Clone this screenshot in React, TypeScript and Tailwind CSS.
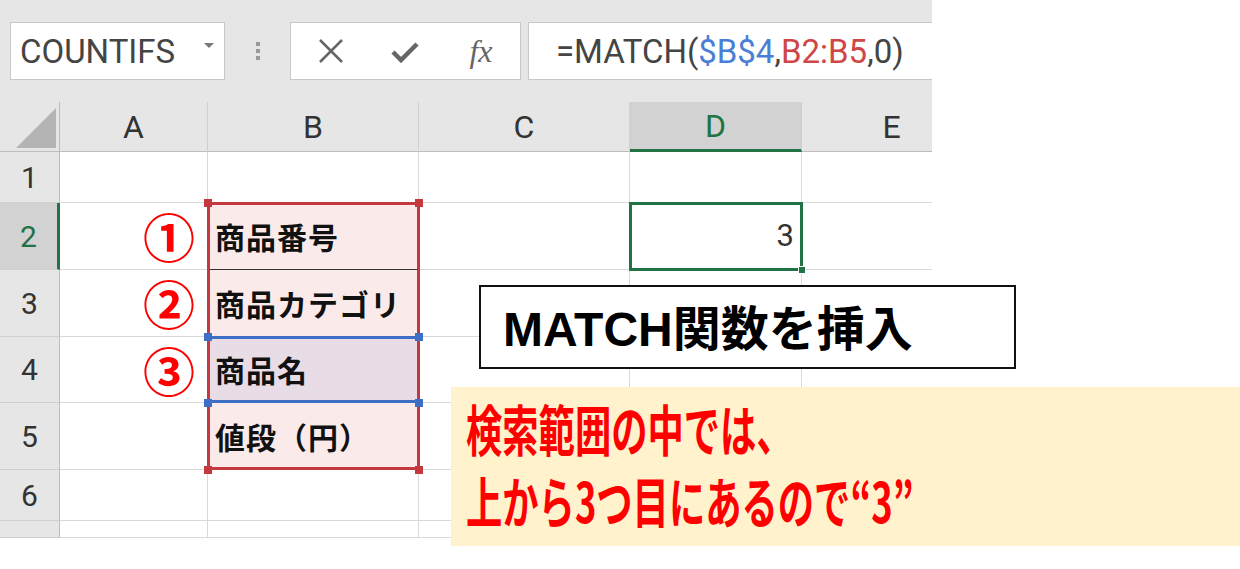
import React from "react";

const font = { fontFamily: 'Roboto, "Noto Sans", "Noto Sans CJK JP", sans-serif' };
const jp = { fontFamily: '"Noto Sans CJK JP", sans-serif' };

const cols = [148, 211, 211, 172, 180];
const rows = [51, 67, 67, 66, 67, 51, 17];

function Handle({ cls }: { cls: string }) {
  return <div className={`absolute w-[8px] h-[8px] ${cls}`} />;
}

export default function App() {
  const colLetters = ["A", "B", "C", "D", "E"];
  const bTexts = ["", "商品番号", "商品カテゴリ", "商品名", "値段（円）", "", ""];
  const circ = ["", "①", "②", "③", "", "", ""];
  return (
    <div className="relative w-[1240px] h-[569px] bg-white overflow-hidden" style={font}>
      <div className="w-[932px] overflow-hidden">
        {/* formula bar */}
        <div className="h-[102px] bg-[#e6e6e6] flex items-start pt-[22px] pl-[10px]">
          <div className="w-[215px] h-[58px] bg-white border border-[#c8c8c8] flex items-center pl-[9px] pr-[10px]">
            <span className="text-[33px] text-[#444] flex-1 pt-[2px]">COUNTIFS</span>
            <svg width="10" height="6" viewBox="0 0 10 6" className="mb-[10px]"><path d="M0 0h10L5 5z" fill="#777" /></svg>
          </div>
          <div className="w-[65px] h-[58px] flex flex-col items-center justify-center gap-[3px]">
            <div className="w-[4px] h-[4px] bg-[#999]" />
            <div className="w-[4px] h-[4px] bg-[#999]" />
            <div className="w-[4px] h-[4px] bg-[#999]" />
          </div>
          <div className="w-[231px] h-[58px] bg-white border border-[#c8c8c8] flex items-center">
            <div className="w-[76px] flex justify-center pl-[4px]">
              <svg width="26" height="26" viewBox="0 0 26 26"><path d="M2 2L24 24M24 2L2 24" stroke="#666" strokeWidth="2.5" /></svg>
            </div>
            <div className="w-[76px] flex justify-center">
              <svg width="30" height="26" viewBox="0 0 30 26"><path d="M3 14l8 8L27 6" stroke="#666" strokeWidth="4.5" fill="none" /></svg>
            </div>
            <div className="w-[76px] flex justify-center">
              <span className="text-[32px] italic text-[#666]" style={{ fontFamily: '"Liberation Serif", serif' }}>fx</span>
            </div>
          </div>
          <div className="ml-[7px] flex-1 h-[58px] bg-white border border-[#c8c8c8] border-r-0 flex items-center pl-[27px]">
            <span className="text-[33px] text-[#444] pt-[2px]">
              =MATCH(<span className="text-[#4a7fd6]">$B$4</span>,<span className="text-[#cf4646]">B2:B5</span>,0)
            </span>
          </div>
        </div>
        {/* grid */}
        <div className="relative">
          <div className="flex h-[50px] bg-[#e6e6e6]">
            <div className="w-[60px] shrink-0 h-full border-r border-[#bdbdbd] border-b border-b-[#bdbdbd] relative">
              <svg width="40" height="40" viewBox="0 0 40 40" className="absolute left-[16px] top-[6px]"><path d="M40 0V40H0z" fill="#b4b4b4" /></svg>
            </div>
            {colLetters.map((c, i) => (
              <div
                key={c}
                style={{ width: cols[i] }}
                className={`shrink-0 h-full flex items-center justify-center text-[32px] border-r border-[#cfcfcf] ${
                  c === "D" ? "bg-[#d2d2d2] text-[#217346] border-b-[3px] border-b-[#217346]" : "text-[#333] border-b border-b-[#bdbdbd]"
                }`}
              >
                {c}
              </div>
            ))}
          </div>
          {rows.map((h, r) => (
            <div key={r} className="flex" style={{ height: h }}>
              <div
                className={`w-[60px] shrink-0 h-full flex items-center justify-center text-[30px] border-b border-[#cfcfcf] ${
                  r === 1 ? "bg-[#d2d2d2] text-[#217346] border-r-[3px] border-r-[#217346]" : "bg-[#e6e6e6] text-[#333] border-r border-r-[#bdbdbd]"
                }`}
              >
                {r === 6 ? "" : r + 1}
              </div>
              {cols.map((w, c) => {
                let bg = "bg-white";
                if (c === 1 && r >= 1 && r <= 4) bg = r === 3 ? "bg-[#e8dde6]" : "bg-[#fbeaea]";
                const bBottom = c === 1 && r === 1 ? "border-b-[#333]" : "border-b-[#d9d9d9]";
                return (
                  <div
                    key={c}
                    style={{ width: w }}
                    className={`shrink-0 h-full border-r border-r-[#d9d9d9] border-b ${bBottom} ${bg} flex items-center ${
                      c === 0 ? "justify-end pr-[12px]" : c === 3 ? "justify-end pr-[7px] overflow-hidden" : "justify-start pl-[7px] overflow-hidden"
                    }`}
                  >
                    {c === 0 && circ[r] && (
                      <span className="text-[52px] font-bold leading-[60px] text-[#ff0000]" style={jp}>{circ[r]}</span>
                    )}
                    {c === 1 && bTexts[r] && (
                      <span className="text-[30px] font-bold text-[#111] tracking-[1px]" style={jp}>{bTexts[r]}</span>
                    )}
                    {c === 3 && r === 1 && <span className="text-[31px] text-[#333]">3</span>}
                  </div>
                );
              })}
            </div>
          ))}
          {/* red range B2:B5 */}
          <div className="absolute left-[207px] top-[100px] w-[213px] h-[268px] border-[3px] border-[#c5383f]" />
          <div className="absolute left-[208px] top-[234px] w-[211px] h-[67px] border-t-[3px] border-b-[3px] border-[#3d6fc6]" />
          <Handle cls="left-[204px] top-[97px] bg-[#c5383f]" />
          <Handle cls="left-[415px] top-[97px] bg-[#c5383f]" />
          <Handle cls="left-[204px] top-[364px] bg-[#c5383f]" />
          <Handle cls="left-[415px] top-[364px] bg-[#c5383f]" />
          <Handle cls="left-[204px] top-[231px] bg-[#3d6fc6]" />
          <Handle cls="left-[415px] top-[231px] bg-[#3d6fc6]" />
          <Handle cls="left-[204px] top-[297px] bg-[#3d6fc6]" />
          <Handle cls="left-[415px] top-[297px] bg-[#3d6fc6]" />
          {/* D2 selection */}
          <div className="absolute left-[629px] top-[100px] w-[174px] h-[69px] border-[3px] border-[#217346]" />
          <div className="absolute left-[798px] top-[164px] w-[8px] h-[8px] bg-[#217346] border border-white" />
        </div>
      </div>
      {/* MATCH label */}
      <div className="absolute left-[479px] top-[285px] w-[537px] h-[84px] bg-white border-2 border-[#111] flex items-center pl-[22px]">
        <span className="text-[48px] font-bold text-black leading-none">
          <span style={{ fontFamily: '"Liberation Sans", sans-serif' }}>MATCH</span>
          <span style={jp}>関数を挿入</span>
        </span>
      </div>
      {/* yellow note */}
      <div className="absolute left-[451px] top-[387px] w-[789px] h-[159px] bg-[#fff2cc] pl-[15px] pt-[4px]">
        <div className="origin-left scale-x-[0.66] w-[1100px] text-[55px] font-bold text-[#ff0000] leading-[72px]" style={jp}>
          検索範囲の中では、
          <br />
          上から3つ目にあるので“3”
        </div>
      </div>
    </div>
  );
}
